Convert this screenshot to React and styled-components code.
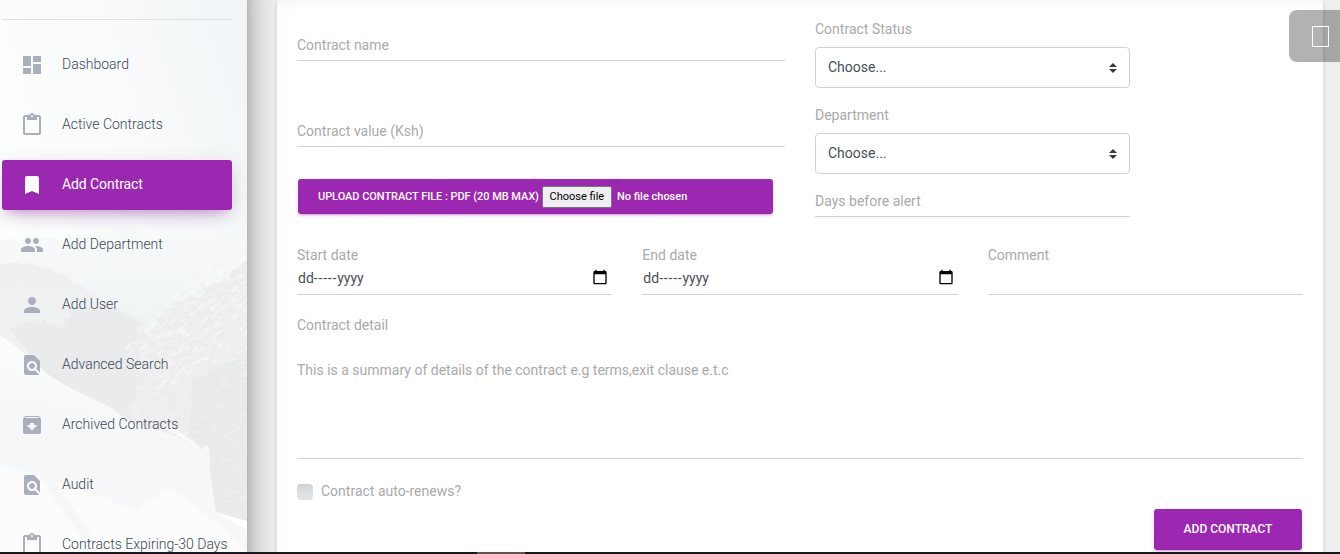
import React from "react";
import styled, { createGlobalStyle, css } from "styled-components";
import {
  MdDashboard,
  MdContentPaste,
  MdBookmark,
  MdPeople,
  MdPerson,
  MdFindInPage,
  MdArchive,
} from "react-icons/md";

const PURPLE = "#9c27b0";

const GlobalStyle = createGlobalStyle`
  *, *::before, *::after { box-sizing: border-box; }
  body {
    margin: 0;
    background: #eee;
    font-family: Roboto, "Liberation Sans", sans-serif;
    font-size: 14px;
    line-height: 20px;
    overflow: hidden;
  }
`;

const Page = styled.div`
  position: relative;
  display: flex;
  height: 554px;
  overflow: hidden;
`;

const Sidebar = styled.aside`
  position: relative;
  z-index: 2;
  flex: 0 0 247px;
  height: 554px;
  overflow: hidden;
  background: #fbfcfc;
`;

const SidebarShadow = styled.div`
  position: relative;
  z-index: 1;
  display: flex;
  flex: 0 0 247px;
  margin: -60px 0;
  padding: 60px 0;
  box-shadow: 0 16px 38px -12px rgba(0, 0, 0, 0.56), 0 4px 25px 0 rgba(0, 0, 0, 0.12),
    0 8px 10px -5px rgba(0, 0, 0, 0.2);
`;

const Scenery = styled.svg`
  position: absolute;
  inset: 0;
`;

const Nav = styled.nav`
  position: relative;
  display: flex;
  flex-direction: column;
  gap: 10px;
  width: 232px;
  padding: 19px 0 0 2px;
`;

const Divider = styled.div`
  flex: 0 0 1px;
  margin-bottom: 10px;
  background: #dedfe1;
`;

const NavItem = styled.a`
  display: flex;
  align-items: center;
  flex: 0 0 50px;
  padding-left: 18px;
  gap: 18px;
  border-radius: 3px;
  color: #3c4858;
  font-weight: 300;
  white-space: nowrap;

  svg {
    flex: none;
    width: 24px;
    height: 24px;
    color: #a9afbb;
  }

  span {
    padding-bottom: 2px;
  }

  ${(p) =>
    p.$active &&
    css`
      background: ${PURPLE};
      color: #fff;
      font-weight: 400;
      letter-spacing: -0.08px;
      box-shadow: 0 12px 20px -10px rgba(156, 39, 176, 0.28), 0 4px 20px 0 rgba(0, 0, 0, 0.12),
        0 7px 8px -5px rgba(156, 39, 176, 0.2);
      svg { color: #fff; }
    `}
`;

const Main = styled.main`
  flex: 1;
  display: flex;
  padding: 0 17px 0 30px;
`;

const Card = styled.form`
  flex: 1;
  display: flex;
  flex-direction: column;
  padding: 19px 20px 0;
  background: linear-gradient(#f7f7f7, #fff 11px);
  box-shadow: 0 1px 4px 0 rgba(0, 0, 0, 0.14);
`;

const TopRow = styled.div`
  display: grid;
  grid-template-columns: 488px 315px;
  column-gap: 30px;
  height: 198px;
`;

const LeftColumn = styled.div`
  display: flex;
  flex-direction: column;
  padding-top: 16px;
`;

const RightColumn = styled.div`
  display: flex;
  flex-direction: column;
`;

const Field = styled.div`
  display: flex;
  flex-direction: column;
  height: ${(p) => p.$height}px;
  margin-bottom: ${(p) => p.$gap || 0}px;
  border-bottom: 1px solid #d2d2d2;
`;

const Label = styled.label`
  color: #aaa;
  line-height: 20px;
  white-space: nowrap;
`;

const SelectBox = styled.div`
  display: flex;
  align-items: center;
  justify-content: space-between;
  height: 41px;
  margin: 8px 0 17px;
  padding: 0 12px;
  border: 1px solid #d2d2d2;
  border-radius: 4px;
  background: #fff;
  color: #495057;

  span { padding-bottom: 1px; }
  svg { margin: 1px 0 0; }
`;

const UploadButton = styled.div`
  display: flex;
  align-items: center;
  width: 475px;
  height: 35px;
  margin-left: 1px;
  padding-left: 20px;
  border-radius: 3px;
  background: ${PURPLE};
  color: #fff;
  font-size: 11px;
  font-weight: 500;
  white-space: nowrap;
  box-shadow: 0 2px 2px 0 rgba(156, 39, 176, 0.14), 0 3px 1px -2px rgba(156, 39, 176, 0.2),
    0 1px 5px 0 rgba(156, 39, 176, 0.12);
`;

const UploadText = styled.span`
  letter-spacing: -0.05px;
`;

const FileTrigger = styled.button`
  width: 70px;
  height: 22px;
  margin: 0 5px 0 3px;
  padding: 0;
  border: 1px solid #767676;
  border-radius: 2px;
  background: #efefef;
  color: #000;
  font: 400 11px Roboto, sans-serif;
`;

const DateRow = styled.div`
  display: grid;
  grid-template-columns: repeat(3, 1fr);
  column-gap: 30px;
  padding-top: 28px;
`;

const DateValue = styled.div`
  display: flex;
  align-items: center;
  justify-content: space-between;
  height: 22px;
  margin-top: 2px;
  padding: 0 4px 0 1px;
  color: #495057;

  svg { margin-bottom: 2px; }
`;

const Dashes = styled.span`
  letter-spacing: 0.8px;
`;

const Detail = styled.div`
  display: flex;
  flex-direction: column;
  gap: 25px;
  height: 144px;
  margin-top: 20px;
  border-bottom: 1px solid #d2d2d2;
`;

const CheckRow = styled.div`
  display: flex;
  align-items: center;
  gap: 8px;
  margin-top: 22px;
`;

const CheckMark = styled.span`
  width: 16px;
  height: 16px;
  margin-top: 2px;
  border-radius: 4px;
  background: linear-gradient(#cdd1d6, #dee2e6 60%);
`;

const Submit = styled.button`
  align-self: flex-end;
  width: 148px;
  height: 41px;
  margin: 8px 1px 0 0;
  padding: 0 0 1px;
  border: 0;
  border-radius: 3px;
  background: ${PURPLE};
  color: #fff;
  font: 500 12px Roboto, sans-serif;
  box-shadow: 0 2px 2px 0 rgba(156, 39, 176, 0.14), 0 3px 1px -2px rgba(156, 39, 176, 0.2),
    0 1px 5px 0 rgba(156, 39, 176, 0.12);
`;

const SettingsTab = styled.div`
  position: absolute;
  z-index: 3;
  top: 10px;
  right: 0;
  display: flex;
  align-items: center;
  width: 51px;
  height: 52px;
  padding-left: 23px;
  border-radius: 8px 0 0 8px;
  background: rgba(0, 0, 0, 0.3);
`;

const MissingGlyph = styled.span`
  width: 17px;
  height: 21px;
  border: 1px solid #fff;
`;

const BottomEdge = styled.div`
  position: absolute;
  z-index: 4;
  left: 0;
  right: 0;
  bottom: 0;
  height: 2px;
  background: linear-gradient(90deg, #16171c 477px, #6b5144 477px 525px, #16171c 525px);
`;

const NAV = [
  { icon: MdDashboard, text: "Dashboard" },
  { icon: MdContentPaste, text: "Active Contracts" },
  { icon: MdBookmark, text: "Add Contract", active: true },
  { icon: MdPeople, text: "Add Department" },
  { icon: MdPerson, text: "Add User" },
  { icon: MdFindInPage, text: "Advanced Search" },
  { icon: MdArchive, text: "Archived Contracts" },
  { icon: MdFindInPage, text: "Audit" },
  { icon: MdContentPaste, text: "Contracts Expiring-30 Days" },
];

const Mountains = () => (
  <Scenery width="247" height="554" viewBox="0 0 247 554">
    <defs>
      <linearGradient id="sky" x1="1" y1="0" x2="0.3" y2="0.5">
        <stop offset="0" stopColor="#f0f4f6" />
        <stop offset="0.5" stopColor="#f8fafb" />
        <stop offset="1" stopColor="#fcfdfd" />
      </linearGradient>
      <linearGradient id="ridge" x1="0" y1="0" x2="0" y2="1">
        <stop offset="0" stopColor="#f8fafa" />
        <stop offset="0.4" stopColor="#f2f5f6" />
        <stop offset="1" stopColor="#eceff0" />
      </linearGradient>
      <linearGradient id="hill" x1="0" y1="0" x2="0" y2="1">
        <stop offset="0" stopColor="#eeeff0" />
        <stop offset="1" stopColor="#f1f3f4" />
      </linearGradient>
      <linearGradient id="snow" x1="0.5" y1="0" x2="0.3" y2="1">
        <stop offset="0" stopColor="#fefefe" />
        <stop offset="0.45" stopColor="#f5f7f9" />
        <stop offset="1" stopColor="#f6f8fa" />
      </linearGradient>
      <filter id="rough" x="-10%" y="-10%" width="120%" height="120%">
        <feTurbulence type="fractalNoise" baseFrequency="0.14" numOctaves="3" seed="4" />
        <feDisplacementMap in="SourceGraphic" scale="12" />
        <feGaussianBlur stdDeviation="0.7" />
      </filter>
      <filter id="speckle" x="0" y="0" width="100%" height="100%">
        <feTurbulence type="fractalNoise" baseFrequency="0.1 0.32" numOctaves="4" seed="9" />
        <feColorMatrix values="0 0 0 0 1  0 0 0 0 1  0 0 0 0 1  4 0 0 0 -2" />
        <feComposite in2="SourceGraphic" operator="in" />
      </filter>
      <filter id="soft">
        <feGaussianBlur stdDeviation="1.2" />
      </filter>
    </defs>
    <rect width="247" height="554" fill="url(#sky)" />
    <g filter="url(#rough)">
      <path d="M-10 240L40 238 70 240 105 232 130 226 150 236 190 234 220 238 260 236V400H-10z" fill="url(#ridge)" />
      <path d="M-10 262L30 264 60 272 90 292 120 310 145 320V440L-10 340z" fill="url(#hill)" />
      <path d="M10 330L25 322 50 322 62 330 70 312 92 306 115 310 140 322 152 345 150 440 60 390z" fill="#eaebec" />
      <path d="M140 350L160 318 190 295 220 280 260 250V560L205 450 130 430z" fill="#ededee" />
      <path d="M190 385L215 370 260 350V550L212 520 190 440z" fill="#e9eaeb" />
    </g>
    <g transform="rotate(-42 195 330)">
      <path d="M130 290H270V350L220 380 125 350z" fill="#fff" filter="url(#speckle)" opacity="0.5" />
    </g>
    <path d="M130 345L247 270V530L210 480 130 420z" fill="#fff" filter="url(#speckle)" opacity="0.22" />
    <path d="M0 335C18 347 30 358 43 370S75 390 100 402 118 419 150 428 180 439 200 451C212 440 208 445 211 480L216 512 247 524V554H0z" fill="url(#snow)" />
    <path d="M165 426C180 434 190 440 200 450" fill="none" stroke="#fff" strokeWidth="3" filter="url(#soft)" />
    <path d="M-4 467C40 470 75 492 100 496L135 512 165 490 180 494 215 522 247 552V560H-4z" fill="#fcfcfc" filter="url(#soft)" />
    <path d="M38 474L54 480 95 542 86 544z" fill="#f4f6f8" filter="url(#soft)" />
    <path d="M215 512L247 521V530z" fill="#fff" />
  </Scenery>
);

const SelectArrows = () => (
  <svg width="8" height="10" viewBox="0 0 4 5">
    <path fill="#343a40" d="M2 0L0 2h4zm0 5L0 3h4z" />
  </svg>
);

const Calendar = () => (
  <svg width="16" height="16" viewBox="0 0 24 24">
    <path d="M20 3h-1V1h-2v2H7V1H5v2H4c-1.100 0-2 .9-2 2v16c0 1.100.9 2 2 2h16c1.100 0 2-.9 2-2V5c0-1.100-.9-2-2-2zm0 18H4V8h16v13z" />
  </svg>
);

const Choice = ({ label }) => (
  <>
    <Label>{label}</Label>
    <SelectBox>
      <span>Choose...</span>
      <SelectArrows />
    </SelectBox>
  </>
);

const DateField = ({ label }) => (
  <Field $height={50}>
    <Label>{label}</Label>
    <DateValue>
      <span>
        dd<Dashes>-----</Dashes>yyyy
      </span>
      <Calendar />
    </DateValue>
  </Field>
);

export default function App() {
  return (
    <Page>
      <GlobalStyle />
      <SidebarShadow>
        <Sidebar>
          <Mountains />
          <Nav>
            <Divider />
            {NAV.map(({ icon: Icon, text, active }) => (
              <NavItem key={text} $active={active}>
                <Icon />
                <span>{text}</span>
              </NavItem>
            ))}
          </Nav>
        </Sidebar>
      </SidebarShadow>
      <Main>
        <Card>
          <TopRow>
            <LeftColumn>
              <Field $height={26} $gap={60}>
                <Label>Contract name</Label>
              </Field>
              <Field $height={26} $gap={32}>
                <Label>Contract value (Ksh)</Label>
              </Field>
              <UploadButton>
                <UploadText>UPLOAD CONTRACT FILE : PDF (20 MB MAX)</UploadText>
                <FileTrigger type="button">Choose file</FileTrigger>
                <span>No file chosen</span>
              </UploadButton>
            </LeftColumn>
            <RightColumn>
              <Choice label="Contract Status" />
              <Choice label="Department" />
              <Field $height={26}>
                <Label>Days before alert</Label>
              </Field>
            </RightColumn>
          </TopRow>
          <DateRow>
            <DateField label="Start date" />
            <DateField label="End date" />
            <Field $height={50}>
              <Label>Comment</Label>
            </Field>
          </DateRow>
          <Detail>
            <Label>Contract detail</Label>
            <Label as="div">This is a summary of details of the contract e.g terms,exit clause e.t.c</Label>
          </Detail>
          <CheckRow>
            <CheckMark />
            <Label>Contract auto-renews?</Label>
          </CheckRow>
          <Submit type="button">ADD CONTRACT</Submit>
        </Card>
      </Main>
      <SettingsTab>
        <MissingGlyph />
      </SettingsTab>
      <BottomEdge />
    </Page>
  );
}
